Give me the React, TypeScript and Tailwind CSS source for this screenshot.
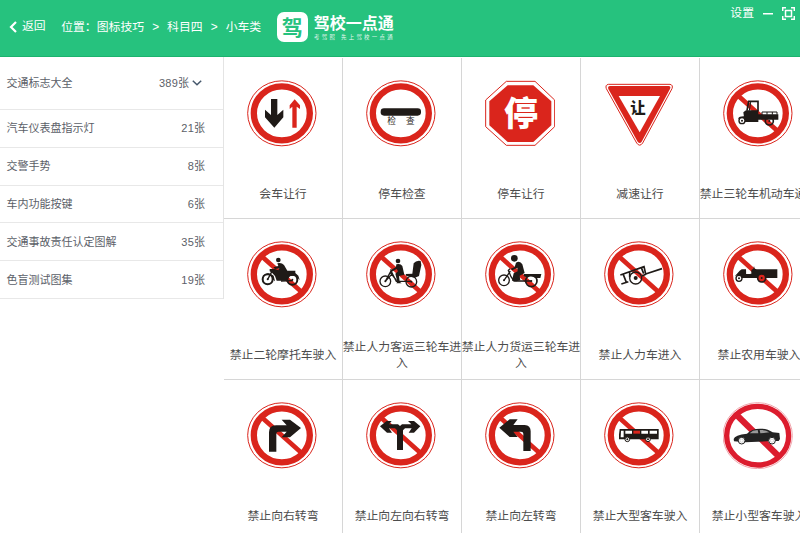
import React from 'react';

const RED = '#da251c';
const INK = '#1f1a17';

interface Category {
  name: string;
  count: number;
  open?: boolean;
}

interface Sign {
  label: string;
  icon: React.ReactNode;
}

const categories: Category[] = [
  { name: '交通标志大全', count: 389, open: true },
  { name: '汽车仪表盘指示灯', count: 21 },
  { name: '交警手势', count: 8 },
  { name: '车内功能按键', count: 6 },
  { name: '交通事故责任认定图解', count: 35 },
  { name: '色盲测试图集', count: 19 }
];

const SignSvg: React.FC<{ children: React.ReactNode }> = ({ children }) => (
  <svg viewBox="0 0 210 201" className="ml-[23px] h-[67px] w-[70px] shrink-0" fill={INK}>
    {children}
  </svg>
);

// Round red sign, with the diagonal bar when `ban` is set
const Ring: React.FC<{ ban?: boolean; children: React.ReactNode }> = ({ ban, children }) => (
  <SignSvg>
    <ellipse cx="104.5" cy="100" rx="102.5" ry="97.5" fill="#fff" stroke={RED} strokeWidth="3" />
    <ellipse cx="104.5" cy="100" rx="84" ry="81" fill="none" stroke={RED} strokeWidth="19" />
    {ban && <path d="M44 46 L163 152" stroke={RED} strokeWidth="14" />}
    {children}
  </SignSvg>
);

const Wheel: React.FC<{ x: number; y: number; r: number; w?: number; fill?: string }> = ({ x, y, r, w = 4, fill = 'none' }) => (
  <>
    <circle cx={x} cy={y} r={r} fill={fill} stroke={INK} strokeWidth={w} />
    <circle cx={x} cy={y} r="3" />
  </>
);

const signs: Sign[] = [
  {
    label: '会车让行',
    icon: (
      <Ring>
        <path d="M72 57H91V105L109 89V112L82 143L54 112V89L72 105Z" />
        <path d="M143 58L159 76V87L149 80V143H136V80L128 87V76Z" fill={RED} />
      </Ring>
    )
  },
  {
    label: '停车检查',
    icon: (
      <Ring>
        <rect x="44" y="85" width="121" height="22" rx="10" />
        <text x="64" y="132" fontSize="26">检</text>
        <text x="120" y="132" fontSize="26">查</text>
      </Ring>
    )
  },
  {
    label: '停车让行',
    icon: (
      <SignSvg>
        <path d="M64 4H150L209 60V140L150 196H64L2 140V60Z" fill="#fff" stroke={RED} strokeWidth="3" />
        <path d="M68 16H145L199 64V136L145 186H68L13 136V64Z" fill={RED} />
        <text x="57" y="139" fontSize="102" fontWeight="900" fill="#fff">停</text>
      </SignSvg>
    )
  },
  {
    label: '减速让行',
    icon: (
      <SignSvg>
        <path d="M13 13H198Q208 15 204 26L116 189Q107 202 98 189L7 26Q3 15 13 13Z" fill="#fff" stroke={RED} strokeWidth="3" />
        <path d="M18 18H194Q202 19 198 27L113 185Q107 193 101 185L13 27Q10 19 18 18Z" fill={RED} />
        <path d="M44 48H168L107 157Z" fill="#fff" />
        <text x="79" y="98" fontSize="46" fontWeight="900">让</text>
      </SignSvg>
    )
  },
  {
    label: '禁止三轮车机动车通行',
    icon: (
      <Ring ban>
        <path d="M72 92L77 64H105V94" fill="none" stroke={INK} strokeWidth="5" />
        <path d="M83 66L79 92" stroke={INK} strokeWidth="3" />
        <path d="M61 97L69 91H106V103H166V119H106V126H65Z" />
        <path d="M45 116Q49 108 65 109V117Z" />
        <path d="M117 104V96H162V104M132 96V104M148 96V104" fill="none" stroke={INK} strokeWidth="3" />
        <Wheel x={57} y={122} r={9} fill="#fff" />
        <Wheel x={139} y={123} r={12} w={5} />
      </Ring>
    )
  },
  {
    label: '禁止二轮摩托车驶入',
    icon: (
      <Ring ban>
        <circle cx="94" cy="57" r="7" />
        <path d="M91 67Q103 63 111 72L121 89H145L145 96L154 104L158 117L145 104L128 105L119 119H89L84 105L75 95L68 91V84H84L94 88L97 82L84 84L79 79L94 75Z" />
        <path d="M47 104Q63 89 80 104L84 121L75 114Q66 101 49 109Z" />
        <Wheel x={62} y={115} r={15} w={6} fill="#fff" />
        <path d="M76 89L62 115M102 120L137 119" stroke={INK} strokeWidth="4" />
        <Wheel x={136} y={116} r={15} w={6} />
      </Ring>
    )
  },
  {
    label: '禁止人力客运三轮车进\n入',
    icon: (
      <Ring ban>
        <circle cx="96" cy="60" r="7" />
        <path d="M91 70Q103 66 109 75L115 101L99 105L101 122L107 127H91L94 122L88 98L96 91L92 84L77 92L74 88L90 78Z" />
        <path d="M74 85L79 98L91 121H117L136 121M79 98L58 121L76 88M72 93L92 119" fill="none" stroke={INK} strokeWidth="4" />
        <path d="M143 67Q151 57 164 60L166 72L159 105L147 110L121 105L119 99L139 98Z" />
        <Wheel x={58} y={121} r={16} />
        <Wheel x={136} y={122} r={16} />
      </Ring>
    )
  },
  {
    label: '禁止人力货运三轮车进\n入',
    icon: (
      <Ring ban>
        <circle cx="88" cy="52" r="10" />
        <path d="M93 65Q105 58 112 70L119 96L104 104L106 118L94 121L81 119L86 97L98 91L97 80L82 88L77 83L89 78Z" />
        <path d="M117 99H169L166 111H151Q139 101 124 109L116 105Z" />
        <path d="M75 83L70 88L78 107L87 120H139M57 118L76 90" fill="none" stroke={INK} strokeWidth="4" />
        <Wheel x={57} y={118} r={16} />
        <Wheel x={139} y={120} r={17} w={5} />
      </Ring>
    )
  },
  {
    label: '禁止人力车进入',
    icon: (
      <Ring ban>
        <path d="M49 102L120 77L125 99L174 83M58 101L67 124M52 129L73 122M77 93V109M112 80L119 98M114 105L127 99" fill="none" stroke={INK} strokeWidth="5" />
        <circle cx="95" cy="111" r="18" fill="none" stroke={INK} strokeWidth="4" />
        <circle cx="95" cy="111" r="6" />
      </Ring>
    )
  },
  {
    label: '禁止农用车驶入',
    icon: (
      <Ring ban>
        <path d="M36 105L50 89L56 85H69L70 99L85 98V87L91 83L93 75L95 83L101 85H163V111H55L49 102Z" />
        <path d="M71 86L83 99H70Z" fill="#fff" />
        <Wheel x={48} y={112} r={9} fill="#fff" />
        <Wheel x={116} y={111} r={12} w={5} fill={RED} />
      </Ring>
    )
  },
  {
    label: '禁止向右转弯',
    icon: (
      <Ring ban>
        <path d="M66 149V91Q66 70 87 70H119L104 53H129L162 78L129 106H104L119 89H94Q88 89 88 96V149Z" />
      </Ring>
    )
  },
  {
    label: '禁止向左向右转弯',
    icon: (
      <Ring ban>
        <path d="M42 73L62 57H77L69 67H96L102 72L108 67H136L126 57H144L163 73L144 92H128L137 79H117L111 85V144H93V85L87 79H69L78 92H63Z" />
      </Ring>
    )
  },
  {
    label: '禁止向左转弯',
    icon: (
      <Ring ban>
        <path d="M43 77L74 52H98L85 69H119Q137 70 137 88V147H115V95Q115 89 108 89H85L98 105H74Z" />
      </Ring>
    )
  },
  {
    label: '禁止大型客车驶入',
    icon: (
      <Ring ban>
        <path d="M47 81H164V112H45V98Z" />
        <path d="M51 86H59V106H50ZM64 86H84V95H64ZM112 86H132V95H112ZM137 86H159V95H137Z" fill="#fff" />
        <path d="M88 86H108V95H88Z" fill={RED} />
        <Wheel x={70} y={112} r={7} w={3} fill="#fff" />
        <Wheel x={132} y={112} r={7} w={3} fill="#fff" />
      </Ring>
    )
  },
  {
    label: '禁止小型客车驶入',
    icon: (
      <SignSvg>
        <ellipse cx="104" cy="101" rx="104" ry="99" fill="#fff" stroke="#f0a5ad" strokeWidth="3" />
        <ellipse cx="104" cy="101" rx="93" ry="88" fill="none" stroke="#dc1c2e" strokeWidth="16" />
        <path d="M41 39L167 163" stroke="#dc1c2e" strokeWidth="19" />
        <path d="M32 111Q35 99 72 95Q86 80 111 80Q134 79 149 91L169 93L171 111L167 117H147L66 121L33 118Z" fill="#222" />
        <path d="M80 94L90 86L104 84L106 94ZM110 84Q128 82 139 91L112 94Z" fill="#999" />
        <circle cx="56" cy="116" r="10" fill="#fff" stroke="#222" strokeWidth="3" />
        <circle cx="147" cy="116" r="10" fill="#fff" stroke="#222" strokeWidth="3" />
        <circle cx="56" cy="116" r="5" fill="none" stroke="#888" />
        <circle cx="147" cy="116" r="5" fill="none" stroke="#888" />
      </SignSvg>
    )
  }
];

const Header: React.FC = () => (
  <header className="flex h-[57px] shrink-0 items-start justify-between border-b border-[#1bb36e] bg-[#26c27e] text-[11.85px] leading-4 text-white">
    <div className="flex">
      <button type="button" className="mt-[18px] ml-[9px] flex h-4 items-center">
        <svg viewBox="0 0 8 12" className="mt-[2px] mr-[5px] h-3 w-2" fill="none" stroke="currentColor" strokeWidth="2.2">
          <path d="M7 1L2 6L7 11" />
        </svg>
        返回
      </button>
      <nav className="mt-[19px] ml-[15.5px] flex">
        <span>位置：</span>
        <span>图标技巧</span>
        <span className="w-[23px] text-center">&gt;</span>
        <span>科目四</span>
        <span className="w-[23px] text-center">&gt;</span>
        <span>小车类</span>
      </nav>
      <div className="mt-3 ml-[15.5px] flex">
        <div className="flex h-[30px] w-[31px] items-center justify-center rounded-[7px] bg-white text-[21px] leading-none font-bold text-[#26c27e]">驾</div>
        <div className="ml-[6px] flex flex-col">
          <span className="mt-1 text-[16px] leading-[16px] font-bold">驾校一点通</span>
          <svg className="h-[9px] w-[84px] opacity-90" viewBox="0 0 84 9" fill="currentColor">
            <text x="0" y="6.5" fontSize="5.4" letterSpacing="2.4">考驾照</text>
            <text x="27" y="6.5" fontSize="5.4" letterSpacing="2.3">先上驾校一点通</text>
          </svg>
        </div>
      </div>
    </div>
    <div className="mt-[5px] mr-[5px] flex h-4 items-center">
      <span>设置</span>
      <svg viewBox="0 0 10 2" className="mt-[1px] ml-[9px] h-[2px] w-[10px]">
        <rect width="10" height="1.5" fill="currentColor" />
      </svg>
      <svg viewBox="0 0 13 13" className="mt-[1px] ml-[9px] size-[13px]" fill="none" stroke="currentColor" strokeWidth="1.5">
        <path d="M.7 4V.7H4M9 .7H12.3V4M12.3 9V12.3H9M4 12.3H.7V9" />
        <rect x="3.5" y="3.5" width="6" height="6" />
      </svg>
    </div>
  </header>
);

const Sidebar: React.FC = () => (
  <ul className="h-[242px] w-[224px] shrink-0 border-r border-[#e4e4e4] text-[11px] leading-4 text-[#5b6068]">
    {categories.map((item) => (
      <li
        key={item.name}
        className={`flex items-center justify-between border-b border-[#e8e8e8] pl-[6.5px] ${
          item.open ? 'h-[53px] pr-[21px]' : 'h-[37.8px] pr-[18px]'
        }`}
      >
        <span>{item.name}</span>
        <span className="flex items-center">
          <span>
            <span className="tracking-[0.2px]">{item.count}</span>张
          </span>
          {item.open && (
            <svg viewBox="0 0 10 6" className="ml-[3px] h-[6px] w-[10px]" fill="none" stroke="#46586c" strokeWidth="1.5">
              <path d="M.8 .8L5 4.8L9.2 .8" />
            </svg>
          )}
        </span>
      </li>
    ))}
  </ul>
);

export default function App() {
  return (
    <div className="flex h-[533px] w-[800px] flex-col overflow-hidden bg-white font-['Liberation_Sans','Noto_Sans_CJK_SC',sans-serif]">
      <Header />
      <div className="flex min-h-0 flex-1">
        <Sidebar />
        <main className="grid shrink-0 auto-rows-[161px] grid-cols-[repeat(5,119px)] pt-[1px]">
          {signs.map((sign) => (
            <div key={sign.label} className="flex flex-col border-r border-b border-[#d6d6d6] pt-[22px]">
              {sign.icon}
              <div className="mt-[31px] flex h-8 items-center justify-center text-center text-[11.85px] leading-4 whitespace-pre text-[#4c4c4c]">
                {sign.label}
              </div>
            </div>
          ))}
        </main>
      </div>
    </div>
  );
}
